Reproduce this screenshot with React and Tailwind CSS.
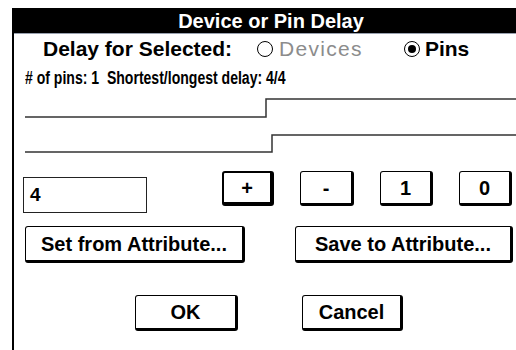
import React from "react";

const Btn = ({ children, className = "", isDefault = false }) => (
  <button
    type="button"
    className={`flex items-center justify-center bg-white text-black font-bold text-[20px] rounded-[3px] border-black ${
      isDefault
        ? "border-t-2 border-l-2 border-r-[4px] border-b-[4px]"
        : "border-t border-l border-r-[3px] border-b-[3px]"
    } ${className}`}
  >
    {children}
  </button>
);

const Radio = ({ checked }) => (
  <span className="shrink-0 w-[16px] h-[16px] rounded-full border-[1.5px] border-black flex items-center justify-center">
    {checked && <span className="w-[8px] h-[8px] rounded-full bg-black" />}
  </span>
);

export default function App() {
  return (
    <div className="w-[516px] h-[350px] overflow-hidden bg-white font-['Liberation_Sans',Arial,sans-serif] text-black">
      <div className="ml-[12px] mt-[8px] w-[516px] h-[342px] border-l-2 border-black flex flex-col">
        {/* title bar */}
        <div className="h-[26px] bg-black text-white text-[20px] font-bold flex items-center justify-center border-b border-gray-400">
          Device or Pin Delay
        </div>

        {/* delay for selected */}
        <div className="h-[22px] mt-[4px] pl-[29px] flex items-center text-[21px] font-bold whitespace-nowrap">
          <span>Delay for Selected:</span>
          <span className="ml-[25px] flex items-center gap-[6px]">
            <Radio />
            <span className="font-normal text-[#8c8c8c] tracking-[1.3px]">Devices</span>
          </span>
          <span className="ml-[41px] flex items-center gap-[5px]">
            <Radio checked />
            <span>Pins</span>
          </span>
        </div>

        <div className="h-[20px] mt-[8px] pl-[11px] flex items-center whitespace-nowrap">
          <span className="inline-block origin-left scale-x-[0.78] text-[18px] font-bold">
            # of pins: 1&nbsp;&nbsp;Shortest/longest delay: 4/4
          </span>
        </div>

        {/* waveforms */}
        <svg className="ml-[11px] mt-[8px]" width="491" height="60" viewBox="0 0 491 60">
          <polyline points="0,21 241,21 241,3 491,3" fill="none" stroke="#333" strokeWidth="1.5" />
          <polyline points="0,56 247,56 247,39 491,39" fill="none" stroke="#333" strokeWidth="1.5" />
        </svg>

        {/* value + step buttons */}
        <div className="flex items-start pl-[9px] mt-[15px]">
          <div className="mt-[6px] w-[124px] h-[36px] border-[1.5px] border-[#222] flex items-center pl-[6px] text-[19px] font-bold">
            4
          </div>
          <div className="ml-[75px] flex gap-[26px]">
            <Btn isDefault className="w-[52px] h-[35px]">+</Btn>
            <Btn className="w-[54px] h-[35px]">-</Btn>
            <Btn className="w-[53px] h-[35px]">1</Btn>
            <Btn className="w-[53px] h-[35px]">0</Btn>
          </div>
        </div>

        {/* attribute buttons */}
        <div className="flex pl-[11px] mt-[13px] gap-[50px]">
          <Btn className="w-[220px] h-[37px]">Set from Attribute...</Btn>
          <Btn className="w-[218px] h-[37px]">Save to Attribute...</Btn>
        </div>

        {/* ok / cancel */}
        <div className="flex pl-[121px] mt-[32px] gap-[64px]">
          <Btn className="w-[103px] h-[36px]">OK</Btn>
          <Btn className="w-[101px] h-[36px]">Cancel</Btn>
        </div>
      </div>
    </div>
  );
}
